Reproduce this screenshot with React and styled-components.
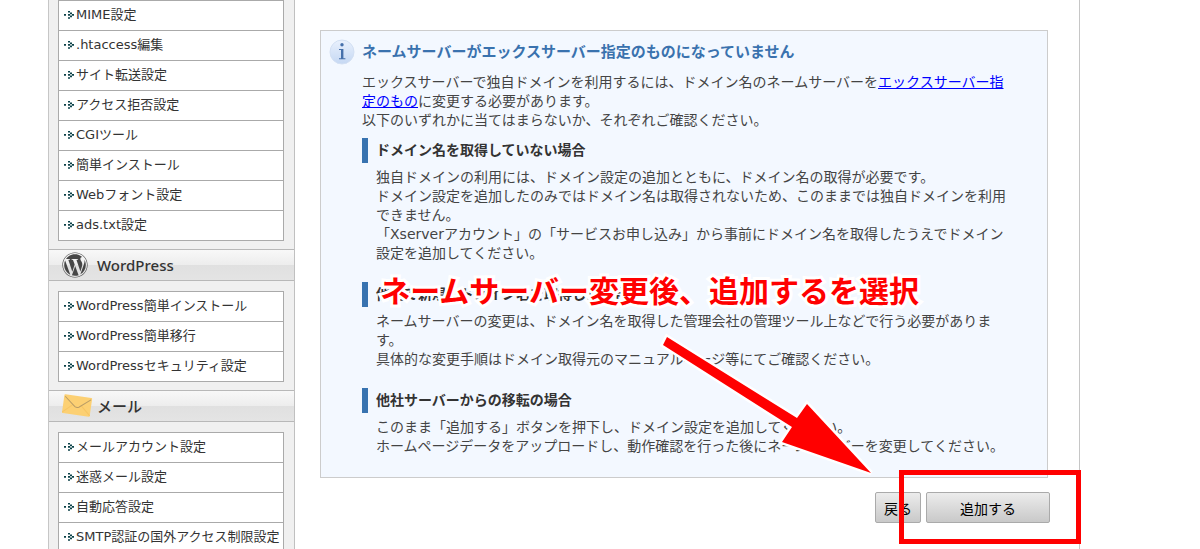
import React from 'react';
import styled, {createGlobalStyle} from 'styled-components';
import {FaWordpress} from 'react-icons/fa';

const GlobalStyle = createGlobalStyle`
  html { scrollbar-width: none; }
  body {
    margin: 0;
    background: #fff;
    color: #444;
    font-family: 'DejaVu Sans', 'Noto Sans CJK JP', sans-serif;
    font-size: 14px;
    line-height: 19px;
  }
  *, *::before, *::after { box-sizing: border-box; }
`

const Page = styled.div`
  display: flex;
  align-items: stretch;
  min-height: 100vh;
  margin: 0 120px 0 48px;
  border: 1px solid #c6c6c6;
  border-width: 0 1px;
`
const Sidebar = styled.nav`
  flex: 0 0 246px;
  background-color: #f0f0f0;
  border-right: 1px solid #c0c0c0;
`
const MenuHeader = styled.h2`
  display: flex;
  align-items: center;
  height: 32px;
  margin: 0;
  padding-left: 13px;
  border: 1px solid #b8b8b8;
  border-width: 1px 0;
  background: linear-gradient(#f8f8f8, #ededed 49%, #e0e0e0 51%, #e4e4e4);
  color: #333;
  font-family: 'Noto Sans', 'Noto Sans CJK JP', sans-serif;
  font-size: 15px;
  font-weight: 500;
`
const MenuIcon = styled.span`
  display: flex;
  width: 35px;
  color: #464646;
`
const Menu = styled.ul`
  margin: ${props => props.$first ? '0' : '10px'} 10px 8px 9px;
  padding: 0;
  list-style: none;
  border: 1px solid #aaa;
  border-bottom: none;
  background-color: #fff;
`
const MenuItem = styled.li`
  height: 30px;
  border-bottom: 1px solid #aaa;
`
const MenuLink = styled.a`
  display: flex;
  align-items: center;
  gap: 2px;
  height: 29px;
  padding: 0 0 2px 5px;
  color: #333;
  font-size: 13px;
  white-space: nowrap;
  text-decoration: none;

  &:hover { text-decoration: underline; }
`

const Main = styled.main`
  position: relative;
  flex: 1;
  min-width: 0;
  padding: 30px 29px 0 25px;
`
const Notice = styled.section`
  display: flex;
  margin-right: 2px;
  padding: 8px 35px 21px 8px;
  border: 1px solid #ccc;
  background-color: #f3f8ff;
`
const NoticeIcon = styled.div`
  flex: 0 0 33px;
`
const NoticeBody = styled.div`
  flex: 1;
`
const NoticeTitle = styled.h1`
  margin: 0 0 7px;
  color: #3a72ae;
  font-size: 15px;
  font-weight: bold;
  line-height: 27px;
`
const Text = styled.p`
  margin: 0;
`
const TextLink = styled.a`
  color: #00f;
`
const Case = styled.section`
  margin-top: ${props => props.$first ? '8px' : '19px'};
`
const CaseTitle = styled.h2`
  margin: 0 0 5px;
  padding-left: 8px;
  border-left: 6px solid #3873b0;
  color: #333;
  font-size: 14px;
  font-weight: bold;
  line-height: 25px;
`
const CaseText = styled.p`
  margin: 0;
  padding-left: 14px;
`

const Buttons = styled.div`
  display: flex;
  justify-content: flex-end;
  gap: 5px;
  padding: 14px 0 26px;
`
const Button = styled.button`
  width: ${props => props.$wide ? '124px' : '46px'};
  height: 31px;
  padding: 0;
  border: 1px solid #aaa;
  border-radius: 2px;
  background: linear-gradient(#ececec, #c9c9c9);
  color: #000;
  font-family: inherit;
  font-size: 14px;
`

const Callout = styled.p`
  position: absolute;
  top: 268px;
  right: 160px;
  margin: 0;
  color: #f00;
  font-family: 'Noto Sans CJK JP', sans-serif;
  font-size: 30px;
  font-weight: bold;
  line-height: 42px;
  white-space: nowrap;
  -webkit-text-stroke: 6px #fff;
  paint-order: stroke fill;
`
const CalloutArrow = styled.svg`
  position: absolute;
  top: 330px;
  right: 199px;
`
const CalloutFrame = styled.div`
  position: absolute;
  top: 470px;
  right: -2px;
  width: 182px;
  height: 74px;
  border: 5px solid #f00;
  pointer-events: none;
`

const serverMenu = [
  'MIME設定',
  '.htaccess編集',
  'サイト転送設定',
  'アクセス拒否設定',
  'CGIツール',
  '簡単インストール',
  'Webフォント設定',
  'ads.txt設定',
]
const wordpressMenu = [
  'WordPress簡単インストール',
  'WordPress簡単移行',
  'WordPressセキュリティ設定',
]
const mailMenu = [
  'メールアカウント設定',
  '迷惑メール設定',
  '自動応答設定',
  'SMTP認証の国外アクセス制限設定',
]

const Bullet = () => (
  <svg width="10" height="11" viewBox="0 0 10 11" fill="#0b4248" aria-hidden="true">
    <path d="M0 5h2v1.700H0zM4 2h2v1.600H4zM6 3.600h2v1.600H6zM4 5h2v1.700H4zM8 5h2v1.700H8zM6 6.600h2v1.600H6zM4 8.200h2v1.600H4z" />
  </svg>
)

const MailIcon = () => (
  <svg width="32" height="26" viewBox="0 0 32 26" aria-hidden="true">
    <g transform="rotate(8 15 13)">
      <rect x="1" y="3" width="28" height="19" rx="1" fill="#fcd073" />
      <path d="M1 21L11 12M29 21L19 12" stroke="#f6c564" fill="none" />
      <path d="M2 5L13 14Q15 15 17 14L28 5" stroke="#b99c66" fill="none" />
    </g>
  </svg>
)

const InfoIcon = () => (
  <svg width="26" height="26" viewBox="0 0 26 26" aria-hidden="true">
    <defs>
      <linearGradient id="info" x1="0" y1="0" x2="0" y2="1">
        <stop offset="0" stopColor="#e9f1fd" />
        <stop offset="1" stopColor="#c5d8f3" />
      </linearGradient>
    </defs>
    <circle cx="13" cy="13" r="12" fill="url(#info)" stroke="#d3e0f3" />
    <circle cx="13" cy="5.800" r="1.700" fill="#4670ab" />
    <path d="M10 10h4.400v9.200h2v1h-6.400v-1h2v-8.200h-2z" fill="#4670ab" />
  </svg>
)

const MenuList = ({items, first}) => (
  <Menu $first={first}>
    {items.map(item => (
      <MenuItem key={item}>
        <MenuLink href="#"><Bullet />{item}</MenuLink>
      </MenuItem>
    ))}
  </Menu>
)

const App = () => {
  return (
    <>
      <GlobalStyle />
      <Page>
        <Sidebar>
          <MenuList items={serverMenu} first />
          <MenuHeader><MenuIcon><FaWordpress size={26} /></MenuIcon>WordPress</MenuHeader>
          <MenuList items={wordpressMenu} />
          <MenuHeader><MenuIcon><MailIcon /></MenuIcon>メール</MenuHeader>
          <MenuList items={mailMenu} />
        </Sidebar>
        <Main>
          <Notice>
            <NoticeIcon><InfoIcon /></NoticeIcon>
            <NoticeBody>
              <NoticeTitle>ネームサーバーがエックスサーバー指定のものになっていません</NoticeTitle>
              <Text>
                エックスサーバーで独自ドメインを利用するには、ドメイン名のネームサーバーを<TextLink href="#">エックスサーバー指定のもの</TextLink>に変更する必要があります。<br />
                以下のいずれかに当てはまらないか、それぞれご確認ください。
              </Text>
              <Case $first>
                <CaseTitle>ドメイン名を取得していない場合</CaseTitle>
                <CaseText>
                  独自ドメインの利用には、ドメイン設定の追加とともに、ドメイン名の取得が必要です。<br />
                  ドメイン設定を追加したのみではドメイン名は取得されないため、このままでは独自ドメインを利用できません。<br />
                  「Xserverアカウント」の「サービスお申し込み」から事前にドメイン名を取得したうえでドメイン設定を追加してください。
                </CaseText>
              </Case>
              <Case>
                <CaseTitle>他社で新規にドメイン名を取得した場合</CaseTitle>
                <CaseText>
                  ネームサーバーの変更は、ドメイン名を取得した管理会社の管理ツール上などで行う必要があります。<br />
                  具体的な変更手順はドメイン取得元のマニュアルページ等にてご確認ください。
                </CaseText>
              </Case>
              <Case>
                <CaseTitle>他社サーバーからの移転の場合</CaseTitle>
                <CaseText>
                  このまま「追加する」ボタンを押下し、ドメイン設定を追加してください。<br />
                  ホームページデータをアップロードし、動作確認を行った後にネームサーバーを変更してください。
                </CaseText>
              </Case>
            </NoticeBody>
          </Notice>
          <Buttons>
            <Button type="button">戻る</Button>
            <Button type="button" $wide>追加する</Button>
          </Buttons>
          <Callout>ネームサーバー変更後、追加するを選択</Callout>
          <CalloutArrow width="220" height="150" viewBox="0 0 220 150" aria-hidden="true">
            <path
              d="M7 7L137 88L147 74L211 143L122 112L132 97L3 15z"
              fill="#f00"
              stroke="#fff"
              strokeWidth="5"
              paintOrder="stroke"
            />
          </CalloutArrow>
          <CalloutFrame />
        </Main>
      </Page>
    </>
  )
}

export default App;
